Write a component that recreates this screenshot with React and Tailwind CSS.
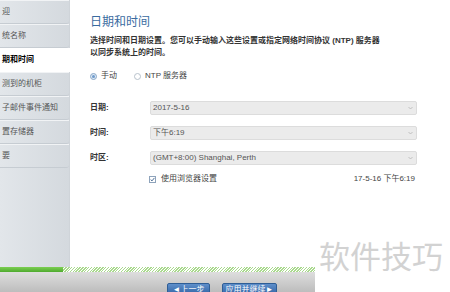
import React from "react";

const navItems = [
  { label: "迎" },
  { label: "统名称" },
  { label: "期和时间", active: true },
  { label: "测到的机柜" },
  { label: "子邮件事件通知" },
  { label: "置存储器" },
  { label: "要" },
];

const fields = [
  { label: "日期:", value: "2017-5-16", mt: "mt-[20px]" },
  { label: "时间:", value: "下午6:19", mt: "mt-[11px]" },
  { label: "时区:", value: "(GMT+8:00) Shanghai, Perth", mt: "mt-[11px]" },
];

const Arrow = () => (
  <svg width="5" height="4" viewBox="0 0 5 4" className="ml-auto mr-[3px]">
    <path d="M0.5 1 L2.5 3 L4.5 1" fill="none" stroke="#b5b5b5" strokeWidth="0.8" />
  </svg>
);

const App = () => {
  return (
    <div className="relative w-[450px] h-[292px] overflow-hidden bg-white font-['Liberation_Sans','Noto_Sans_CJK_SC',sans-serif] text-[#333]">
      {/* top area */}
      <div className="flex h-[267px]">
        {/* sidebar */}
        <aside className="w-[70px] h-full bg-gradient-to-r from-[#e2e6ea] to-[#d4d9de] border-r border-[#cfd4d9] flex flex-col">
          {navItems.map((item, i) => (
            <div
              key={i}
              className={
                item.active
                  ? "h-[24px] flex items-center pl-[2px] bg-white text-[8px] font-bold text-black -mr-px"
                  : "h-[24px] flex items-center pl-[2px] text-[8px] text-[#555] border-b border-[#c6ccd2] shadow-[inset_0_1px_0_#f1f3f5] rounded-br-[3px]"
              }
            >
              {item.label}
            </div>
          ))}
        </aside>

        {/* main */}
        <main className="flex-1 pl-[20px] flex flex-col">
          <h1 className="mt-[14px] text-[12px] leading-[14px] text-[#3a6b9f] font-['Noto_Sans_CJK_SC',sans-serif]">
            日期和时间
          </h1>
          <p className="mt-[7px] text-[8px] leading-[12px] text-[#333] font-bold">
            选择时间和日期设置。您可以手动输入这些设置或指定网络时间协议 (NTP) 服务器
            <br />
            以同步系统上的时间。
          </p>

          {/* radios */}
          <div className="mt-[12px] h-[10px] flex items-center text-[8px] text-[#444]">
            <span className="w-[7px] h-[7px] rounded-full border border-[#8aa8c8] bg-[#dde9f5] flex items-center justify-center">
              <span className="w-[3px] h-[3px] rounded-full bg-[#6f9acb]" />
            </span>
            <span className="ml-[4px]">手动</span>
            <span className="ml-[17px] w-[7px] h-[7px] rounded-full border border-[#b8c2cc] bg-white" />
            <span className="ml-[4px]">NTP 服务器</span>
          </div>

          {/* fields */}
          {fields.map((f, i) => (
            <div key={i} className={`${f.mt} flex items-center h-[14px]`}>
              <span className="w-[60px] text-[8px] text-[#333] font-bold">{f.label}</span>
              <div className="w-[267px] h-[14px] bg-[#ebebeb] border border-[#dcdcdc] rounded-[2px] flex items-center pl-[2px] text-[8px] text-[#555]">
                {f.value}
                <Arrow />
              </div>
            </div>
          ))}

          {/* checkbox row */}
          <div className="mt-[9px] h-[10px] flex items-center text-[8px] text-[#444] w-[327px]">
            <span className="ml-[59px] w-[7px] h-[7px] border border-[#8ea3bb] bg-white flex items-center justify-center">
              <svg width="5" height="5" viewBox="0 0 5 5">
                <path d="M0.6 2.5 L2 3.9 L4.4 0.9" fill="none" stroke="#3b5f8a" strokeWidth="0.9" />
              </svg>
            </span>
            <span className="ml-[5px]">使用浏览器设置</span>
            <span className="ml-auto mr-[2px]">17-5-16 下午6:19</span>
          </div>
        </main>
      </div>

      {/* bottom bar */}
      <div className="w-[315px] flex flex-col">
        <div className="flex h-[5px]">
          <div className="w-[63px] bg-gradient-to-b from-[#7ccf52] to-[#4eaa2e]" />
          <div className="flex-1 bg-[repeating-linear-gradient(135deg,#a9d98d_0px,#a9d98d_1px,#ffffff_1px,#ffffff_2px)]" />
        </div>
        <div className="h-[20px] bg-gradient-to-b from-[#dedede] to-[#bdbdbd] relative">
          <div className="absolute left-[167px] top-[11px] flex gap-[12px]">
            <span className="w-[43px] h-[13px] rounded-[2px] border border-[#2f5e96] bg-gradient-to-b from-[#5f8fca] to-[#2f62a3] text-white text-[8px] leading-[11px] text-center">
              ◄上一步
            </span>
            <span className="w-[55px] h-[13px] rounded-[2px] border border-[#2f5e96] bg-gradient-to-b from-[#5f8fca] to-[#2f62a3] text-white text-[8px] leading-[11px] text-center">
              应用并继续►
            </span>
          </div>
        </div>
      </div>

      {/* watermark */}
      <div className="absolute left-[319px] top-[237px] text-[31px] leading-[36px] text-[#d2d2d2] font-['Noto_Sans_CJK_SC',sans-serif]">
        软件技巧
      </div>
    </div>
  );
};

export default App;
